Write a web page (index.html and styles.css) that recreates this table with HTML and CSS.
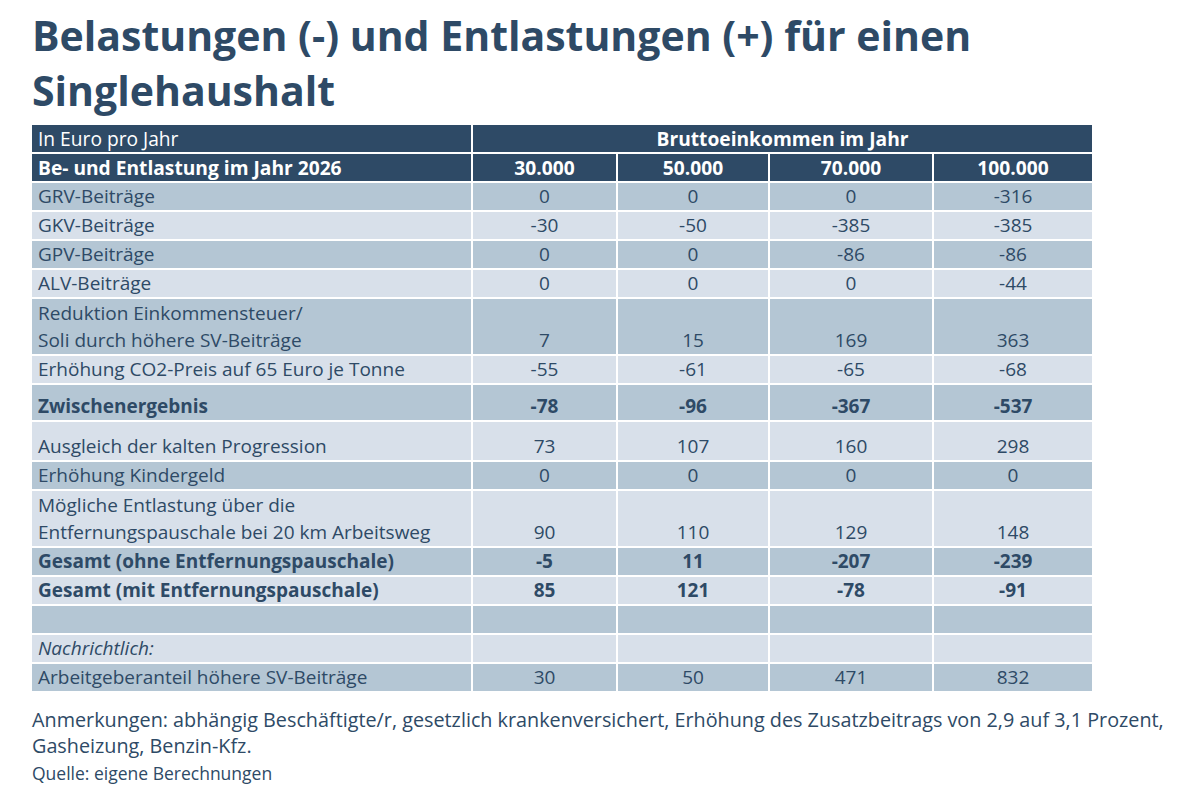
FILE: index.html
```html
<!DOCTYPE html>
<html lang="de">
<head>
<meta charset="utf-8">
<title>Belastungen und Entlastungen</title>
<link rel="stylesheet" href="styles.css">
</head>
<body>
<div class="page">
  <h1 class="title">Belastungen (-) und Entlastungen (+) für einen<br>Singlehaushalt</h1>
  <table class="data">
    <colgroup>
      <col class="c-label"><col class="c1"><col class="c2"><col class="c3"><col class="c4">
    </colgroup>
    <thead>
      <tr class="h1row">
        <th class="lbl normal">In Euro pro Jahr</th>
        <th colspan="4">Bruttoeinkommen im Jahr</th>
      </tr>
      <tr class="h2row">
        <th class="lbl">Be- und Entlastung im Jahr 2026</th>
        <th>30.000</th><th>50.000</th><th>70.000</th><th>100.000</th>
      </tr>
    </thead>
    <tbody>
      <tr class="dark"><td class="lbl">GRV-Beiträge</td><td>0</td><td>0</td><td>0</td><td>-316</td></tr>
      <tr class="light"><td class="lbl">GKV-Beiträge</td><td>-30</td><td>-50</td><td>-385</td><td>-385</td></tr>
      <tr class="dark"><td class="lbl">GPV-Beiträge</td><td>0</td><td>0</td><td>-86</td><td>-86</td></tr>
      <tr class="light"><td class="lbl">ALV-Beiträge</td><td>0</td><td>0</td><td>0</td><td>-44</td></tr>
      <tr class="dark two"><td class="lbl">Reduktion Einkommensteuer/<br>Soli durch höhere SV-Beiträge</td><td>7</td><td>15</td><td>169</td><td>363</td></tr>
      <tr class="light"><td class="lbl">Erhöhung CO2-Preis auf 65 Euro je Tonne</td><td>-55</td><td>-61</td><td>-65</td><td>-68</td></tr>
      <tr class="dark bold tall1"><td class="lbl">Zwischenergebnis</td><td>-78</td><td>-96</td><td>-367</td><td>-537</td></tr>
      <tr class="light tall2"><td class="lbl">Ausgleich der kalten Progression</td><td>73</td><td>107</td><td>160</td><td>298</td></tr>
      <tr class="dark"><td class="lbl">Erhöhung Kindergeld</td><td>0</td><td>0</td><td>0</td><td>0</td></tr>
      <tr class="light two"><td class="lbl">Mögliche Entlastung über die<br>Entfernungspauschale bei 20 km Arbeitsweg</td><td>90</td><td>110</td><td>129</td><td>148</td></tr>
      <tr class="dark bold"><td class="lbl">Gesamt (ohne Entfernungspauschale)</td><td>-5</td><td>11</td><td>-207</td><td>-239</td></tr>
      <tr class="light bold"><td class="lbl">Gesamt (mit Entfernungspauschale)</td><td>85</td><td>121</td><td>-78</td><td>-91</td></tr>
      <tr class="dark"><td class="lbl"></td><td></td><td></td><td></td><td></td></tr>
      <tr class="light"><td class="lbl italic">Nachrichtlich:</td><td></td><td></td><td></td><td></td></tr>
      <tr class="dark"><td class="lbl">Arbeitgeberanteil höhere SV-Beiträge</td><td>30</td><td>50</td><td>471</td><td>832</td></tr>
    </tbody>
  </table>
  <p class="note">Anmerkungen: abhängig Beschäftigte/r, gesetzlich krankenversichert, Erhöhung des Zusatzbeitrags von 2,9 auf 3,1 Prozent,<br>Gasheizung, Benzin-Kfz.</p>
  <p class="source">Quelle: eigene Berechnungen</p>
</div>
</body>
</html>
```
FILE: styles.css
```css
html, body {
  margin: 0;
  padding: 0;
  background: #ffffff;
}

body {
  font-family: "Open Sans", "Noto Sans", sans-serif;
  color: #2e4a66;
}

.page {
  padding: 0 0 0 32px;
}

.title {
  margin: 0;
  padding-top: 8px;
  font-size: 41px;
  line-height: 55px;
  font-weight: 700;
  color: #2e4a66;
}

.data {
  border-collapse: separate;
  border-spacing: 2px;
  margin: 5px 0 0 -2px;
  table-layout: fixed;
  width: 1064px;
  font-size: 19px;
}

.c-label { width: 439px; }
.c1 { width: 143px; }
.c2 { width: 150px; }
.c3 { width: 162px; }
.c4 { width: 158px; }

.data th,
.data td {
  padding: 0;
  line-height: 27px;
  height: 27px;
  text-align: center;
  vertical-align: bottom;
  white-space: nowrap;
}

.data thead th {
  background: #2e4a66;
  color: #ffffff;
  font-weight: 700;
  font-size: 19.2px;
}

.data .lbl {
  text-align: left;
  padding-left: 6px;
}

.data th.normal {
  font-weight: 400;
}

.dark td { background: #b4c6d4; }
.light td { background: #d8e0ea; }

.bold td { font-weight: 700; }

.two td { height: 55px; }
.tall1 td { height: 35px; }
.tall2 td { height: 38px; }

.italic { font-style: italic; }

.note {
  margin: 14px 0 0 0;
  font-size: 19.8px;
  line-height: 26px;
}

.source {
  margin: 2px 0 0 0;
  font-size: 17.5px;
  line-height: 24px;
}
```
